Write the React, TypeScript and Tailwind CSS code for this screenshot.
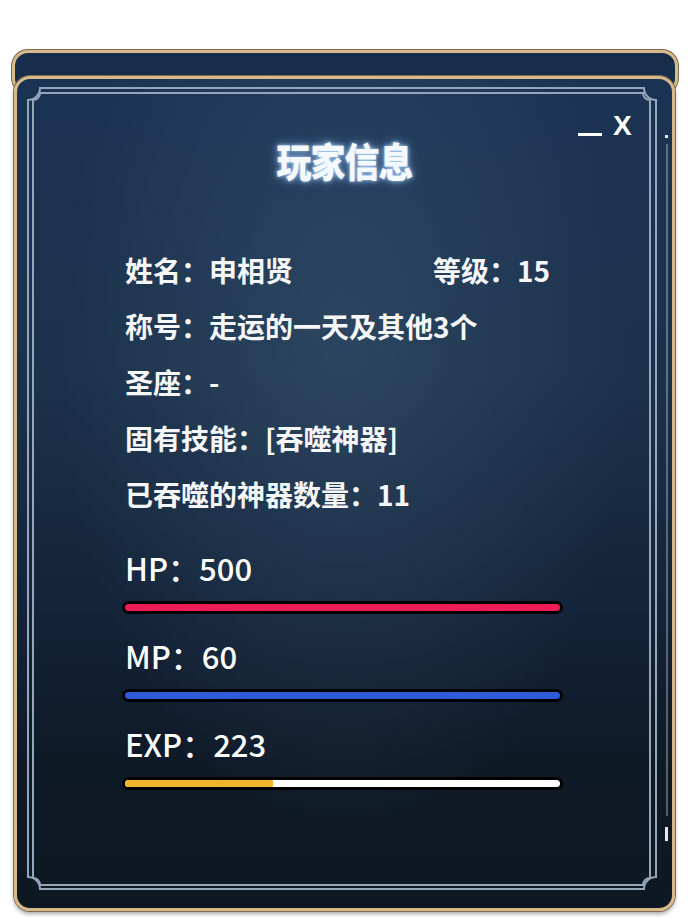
const info = [
  { label: '称号', value: '走运的一天及其他3个' },
  { label: '圣座', value: '-' },
  { label: '固有技能', value: '[吞噬神器]' },
  { label: '已吞噬的神器数量', value: '11' },
];

const stats = [
  { label: 'HP', value: '500', fill: 'bg-[#ee1c55]', pct: 100, gap: 'mt-[26px]' },
  { label: 'MP', value: '60', fill: 'bg-[#2f5ad8]', pct: 100, gap: 'mt-[22px]' },
  { label: 'EXP', value: '223', fill: 'bg-[#efb52b]', pct: 34, gap: 'mt-[22px]' },
];

function FrameLines() {
  // outer and inner double border with concave corners
  const outer = { l: 11, t: 9, r: 639, b: 810, c: 12 };
  const inner = { l: 16, t: 14, r: 633, b: 806, c: 7 };
  const path = (f: typeof outer) =>
    `M ${f.l + f.c} ${f.t} H ${f.r - f.c} A ${f.c} ${f.c} 0 0 0 ${f.r} ${f.t + f.c} V ${f.b - f.c} A ${f.c} ${f.c} 0 0 0 ${f.r - f.c} ${f.b} H ${f.l + f.c} A ${f.c} ${f.c} 0 0 0 ${f.l} ${f.b - f.c} V ${f.t + f.c} A ${f.c} ${f.c} 0 0 0 ${f.l + f.c} ${f.t} Z`;
  return (
    <svg className="absolute inset-0 pointer-events-none" width="655" height="829">
      <path d={path(outer)} fill="none" stroke="#93a6ba" strokeWidth="2" />
      <path d={path(inner)} fill="none" stroke="#93a6ba" strokeWidth="2" />
    </svg>
  );
}

export default function App() {
  return (
    <div className="w-[690px] h-[917px] bg-white pt-[50px] font-['Noto_Sans_CJK_SC',sans-serif]">
      {/* back panel peeking above */}
      <div className="mx-[12px] h-[44px] rounded-[16px] border-[3px] border-[#d7b98a] bg-[#172d4a] shadow-[0_0_0_1px_#7d6a50]" />

      {/* main panel */}
      <div className="relative -mt-[18px] ml-[14px] mr-[15px] h-[835px] rounded-[16px] border-[3px] border-[#d7b98a] shadow-[0_0_0_1px_#7d6a50,0_3px_4px_rgba(0,0,0,0.35)] bg-[radial-gradient(ellipse_at_50%_32%,rgba(62,92,120,0.45),transparent_62%),linear-gradient(180deg,#1b3353_0%,#1c324b_35%,#14243a_62%,#0f1a27_82%,#0e1822_100%)] overflow-hidden">
        <FrameLines />

        {/* window controls */}
        <div className="absolute left-[561px] top-[34px] flex items-end gap-[11px]">
          <div className="mb-[3px] h-[3px] w-[24px] bg-white" />
          <span className="font-['Liberation_Sans',sans-serif] text-[28px] font-bold leading-[26px] text-white">X</span>
        </div>

        {/* scroll marks */}
        <div className="absolute left-[648px] top-[56px] flex flex-col items-center">
          <div className="h-[3px] w-[3px] bg-white/90" />
          <div className="mt-[6px] h-[672px] w-[2px] bg-white/30" />
          <div className="mt-[11px] h-[14px] w-[3px] bg-white/90" />
        </div>

        <div className="relative pt-[59px] pl-[108px] text-white">
          <div className="text-center -ml-[108px] h-[44px] leading-[44px]">
            <span className="inline-block scale-y-[1.15] text-[35px] font-black tracking-[-1px] text-[#f4f8ff] [text-shadow:0_0_4px_rgba(180,215,255,0.95),0_0_11px_rgba(120,170,230,0.75)]">
              玩家信息
            </span>
          </div>

          <div className="mt-[60px] text-[28px] font-bold leading-[56px] text-[#f5f6f8]">
            <div className="flex">
              <div className="w-[308px]">姓名：申相贤</div>
              <div>等级：15</div>
            </div>
            {info.map((row) => (
              <div key={row.label}>
                {row.label}：{row.value}
              </div>
            ))}
          </div>

          {stats.map((s) => (
            <div key={s.label} className={s.gap}>
              <div className="h-[40px] text-[31px] font-medium leading-[40px] text-white">
                {s.label}：{s.value}
              </div>
              <div className="-ml-[3px] mt-[13px] h-[13px] w-[441px] rounded-full bg-black p-[3px]">
                <div className="flex h-full w-full overflow-hidden rounded-full bg-white">
                  <div className={`h-full ${s.fill}`} style={{ width: `${s.pct}%` }} />
                </div>
              </div>
            </div>
          ))}
        </div>
      </div>
    </div>
  );
}
